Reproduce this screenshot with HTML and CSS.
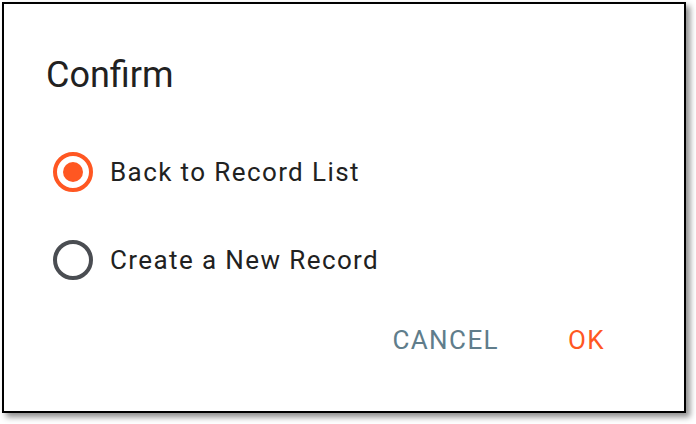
FILE: index.html
```html
<!DOCTYPE html>
<html lang="en">
<head>
    <meta charset="UTF-8">
    <title>Confirm</title>
    <link rel="stylesheet" href="styles.css">
</head>
<body>
    <div class="dialog">
        <h2 class="dialog-title">Confirm</h2>

        <div class="options">
            <label class="option">
                <span class="radio checked"></span>
                <span class="option-text">Back to Record List</span>
            </label>
            <label class="option">
                <span class="radio"></span>
                <span class="option-text">Create a New Record</span>
            </label>
        </div>

        <div class="actions">
            <button class="btn btn-cancel">CANCEL</button>
            <button class="btn btn-ok">OK</button>
        </div>
    </div>
</body>
</html>
```

FILE: styles.css
```css
* {
    margin: 0;
    padding: 0;
    box-sizing: border-box;
}

body {
    font-family: Roboto, 'Liberation Sans', sans-serif;
    background: #fff;
    color: #212121;
    width: 696px;
    height: 424px;
    padding: 2px;
}

.dialog {
    width: 684px;
    height: 411px;
    background: #fff;
    border: 2px solid #000;
    box-shadow: 4px 4px 6px rgba(0, 0, 0, 0.45);
    padding: 50px 0 0 42px;
}

.dialog-title {
    font-size: 36px;
    font-weight: 400;
    line-height: 42px;
    color: #212121;
}

.options {
    margin-top: 56px;
    display: flex;
    flex-direction: column;
    gap: 48px;
}

.option {
    display: flex;
    align-items: center;
    gap: 17px;
}

.radio {
    width: 40px;
    height: 40px;
    border-radius: 50%;
    border: 4px solid #4a4d52;
    margin-left: 7px;
    display: flex;
    align-items: center;
    justify-content: center;
}

.radio.checked {
    border-color: #ff5722;
}

.radio.checked::after {
    content: "";
    width: 20px;
    height: 20px;
    border-radius: 50%;
    background: #ff5722;
}

.option-text {
    font-size: 26px;
    line-height: 40px;
    letter-spacing: 1.4px;
}

.actions {
    display: flex;
    justify-content: flex-end;
    gap: 69px;
    margin-top: 40px;
    padding-right: 79px;
}

.btn {
    background: none;
    border: none;
    font-family: inherit;
    font-size: 26px;
    font-weight: 400;
    line-height: 40px;
    letter-spacing: 1.4px;
    cursor: pointer;
}

.btn-cancel {
    color: #607d8b;
}

.btn-ok {
    color: #ff5722;
}
```
